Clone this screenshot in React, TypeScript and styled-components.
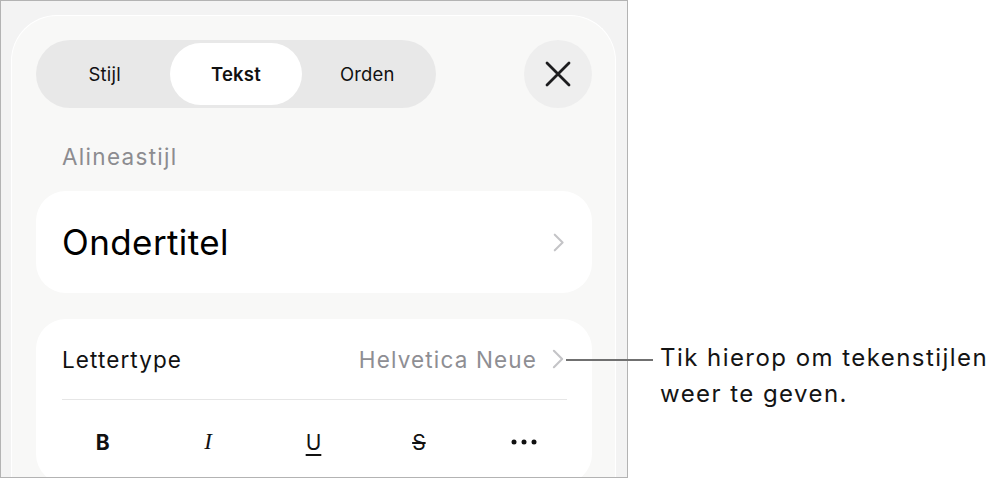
import React from "react";
import styled, { createGlobalStyle } from "styled-components";

const GlobalStyle = createGlobalStyle`
  html, body {
    margin: 0;
    padding: 0;
    background: #ffffff;
  }
  body {
    font-family: Inter, "Noto Sans", "Liberation Sans", sans-serif;
    color: #111;
    -webkit-font-smoothing: antialiased;
  }
`;

const Stage = styled.div`
  position: relative;
  width: 1003px;
  height: 479px;
  overflow: hidden;
`;

const Frame = styled.div`
  box-sizing: border-box;
  width: 628px;
  height: 478px;
  border: 1px solid #b3b3b3;
  background: #f3f3f3;
  padding: 14px 11px 0 10px;
  overflow: hidden;
`;

const Panel = styled.div`
  box-sizing: border-box;
  height: 100%;
  display: flex;
  flex-direction: column;
  background: #f8f8f7;
  border: 1px solid #ffffff;
  border-bottom: none;
  border-radius: 46px 46px 0 0;
  padding: 24px 23px 0 24px;
`;

const Header = styled.div`
  display: flex;
  align-items: center;
  justify-content: space-between;
`;

const Segmented = styled.div`
  box-sizing: border-box;
  display: flex;
  width: 400px;
  height: 68px;
  padding: 3px;
  border-radius: 34px;
  background: #e8e8e8;
`;

const Segment = styled.div<{ active?: boolean }>`
  flex: 1;
  display: flex;
  align-items: center;
  justify-content: center;
  border-radius: 31px;
  font-size: 18.5px;
  letter-spacing: 0.2px;
  font-weight: ${({ active }) => (active ? 600 : 400)};
  color: #111;
  background: ${({ active }) => (active ? "#ffffff" : "transparent")};
`;

const CloseButton = styled.div`
  width: 68px;
  height: 68px;
  border-radius: 50%;
  background: #eeeeee;
  display: flex;
  align-items: center;
  justify-content: center;
`;

const SectionLabel = styled.div`
  margin: 35px 0 0 26px;
  font-size: 22.5px;
  letter-spacing: 1.3px;
  line-height: 27px;
  color: #8c8c90;
`;

const Card = styled.div<{ top: number }>`
  margin-top: ${({ top }) => top}px;
  background: #ffffff;
  border-radius: 30px;
  display: flex;
  flex-direction: column;
`;

const StyleRow = styled.div`
  height: 102px;
  display: flex;
  align-items: center;
  justify-content: space-between;
  padding: 0 28px 0 26px;
`;

const StyleName = styled.div`
  font-size: 35px;
  letter-spacing: 0.4px;
  color: #000;
`;

const FontRow = styled.div`
  height: 80px;
  margin: 0 25px 0 26px;
  border-bottom: 1px solid #e6e6e6;
  display: flex;
  align-items: center;
  justify-content: space-between;
`;

const RowLabel = styled.div`
  font-size: 22.5px;
  letter-spacing: 1.1px;
  color: #111;
`;

const RowValue = styled.div`
  display: flex;
  align-items: center;
  gap: 15px;
  padding-right: 3px;
  font-size: 22.5px;
  letter-spacing: 1.15px;
  color: #8e8e93;
`;

const FormatRow = styled.div`
  height: 84px;
  display: grid;
  grid-template-columns: repeat(5, 1fr);
  padding: 0 15px 0 14px;
`;

const FormatButton = styled.div<{ variant: "bold" | "italic" | "underline" | "strike" | "more" }>`
  display: flex;
  align-items: center;
  justify-content: center;
  font-size: ${({ variant }) => (variant === "italic" ? 23 : 21)}px;
  color: #111;
  font-family: ${({ variant }) =>
    variant === "italic" ? '"Liberation Serif", serif' : 'Inter, "Liberation Sans", sans-serif'};
  font-weight: ${({ variant }) => (variant === "bold" ? 700 : 400)};
  font-style: ${({ variant }) => (variant === "italic" ? "italic" : "normal")};
  text-decoration: ${({ variant }) =>
    variant === "underline" ? "underline" : variant === "strike" ? "line-through" : "none"};
  text-decoration-thickness: 1.5px;
  text-underline-offset: 4px;
`;

const Callout = styled.div`
  position: absolute;
  left: 566px;
  top: 340px;
  display: flex;
  align-items: flex-start;
`;

const Leader = styled.div`
  width: 87px;
  height: 1.5px;
  margin-top: 19px;
  background: #707070;
`;

const CalloutText = styled.div`
  margin-left: 7px;
  font-size: 24px;
  letter-spacing: 1.45px;
  line-height: 36px;
  color: #141414;
`;

const Chevron: React.FC<{ size?: number }> = ({ size = 18 }) => (
  <svg width={size * 0.6} height={size} viewBox="0 0 10 17" fill="none">
    <path d="M1.5 1.5 L8.5 8.5 L1.5 15.5" stroke="#c4c4c7" strokeWidth="1.8" strokeLinecap="round" strokeLinejoin="round" />
  </svg>
);

const CloseIcon = () => (
  <svg width="28" height="28" viewBox="0 0 28 28" fill="none">
    <path d="M3 3 L25 25 M25 3 L3 25" stroke="#1c1c1e" strokeWidth="2.8" strokeLinecap="round" />
  </svg>
);

const MoreIcon = () => (
  <svg width="26" height="6" viewBox="0 0 26 6" fill="#111">
    <circle cx="3" cy="3" r="2.5" />
    <circle cx="13" cy="3" r="2.5" />
    <circle cx="23" cy="3" r="2.5" />
  </svg>
);

const App: React.FC = () => {
  return (
    <Stage>
      <GlobalStyle />
      <Frame>
        <Panel>
          <Header>
            <Segmented>
              <Segment>Stijl</Segment>
              <Segment active>Tekst</Segment>
              <Segment>Orden</Segment>
            </Segmented>
            <CloseButton>
              <CloseIcon />
            </CloseButton>
          </Header>

          <SectionLabel>Alineastijl</SectionLabel>

          <Card top={21}>
            <StyleRow>
              <StyleName>Ondertitel</StyleName>
              <Chevron size={19} />
            </StyleRow>
          </Card>

          <Card top={26}>
            <FontRow>
              <RowLabel>Lettertype</RowLabel>
              <RowValue>
                Helvetica Neue
                <Chevron size={20} />
              </RowValue>
            </FontRow>
            <FormatRow>
              <FormatButton variant="bold">B</FormatButton>
              <FormatButton variant="italic">I</FormatButton>
              <FormatButton variant="underline">U</FormatButton>
              <FormatButton variant="strike">S</FormatButton>
              <FormatButton variant="more">
                <MoreIcon />
              </FormatButton>
            </FormatRow>
          </Card>
        </Panel>
      </Frame>

      <Callout>
        <Leader />
        <CalloutText>
          Tik hierop om tekenstijlen
          <br />
          weer te geven.
        </CalloutText>
      </Callout>
    </Stage>
  );
};

export default App;
